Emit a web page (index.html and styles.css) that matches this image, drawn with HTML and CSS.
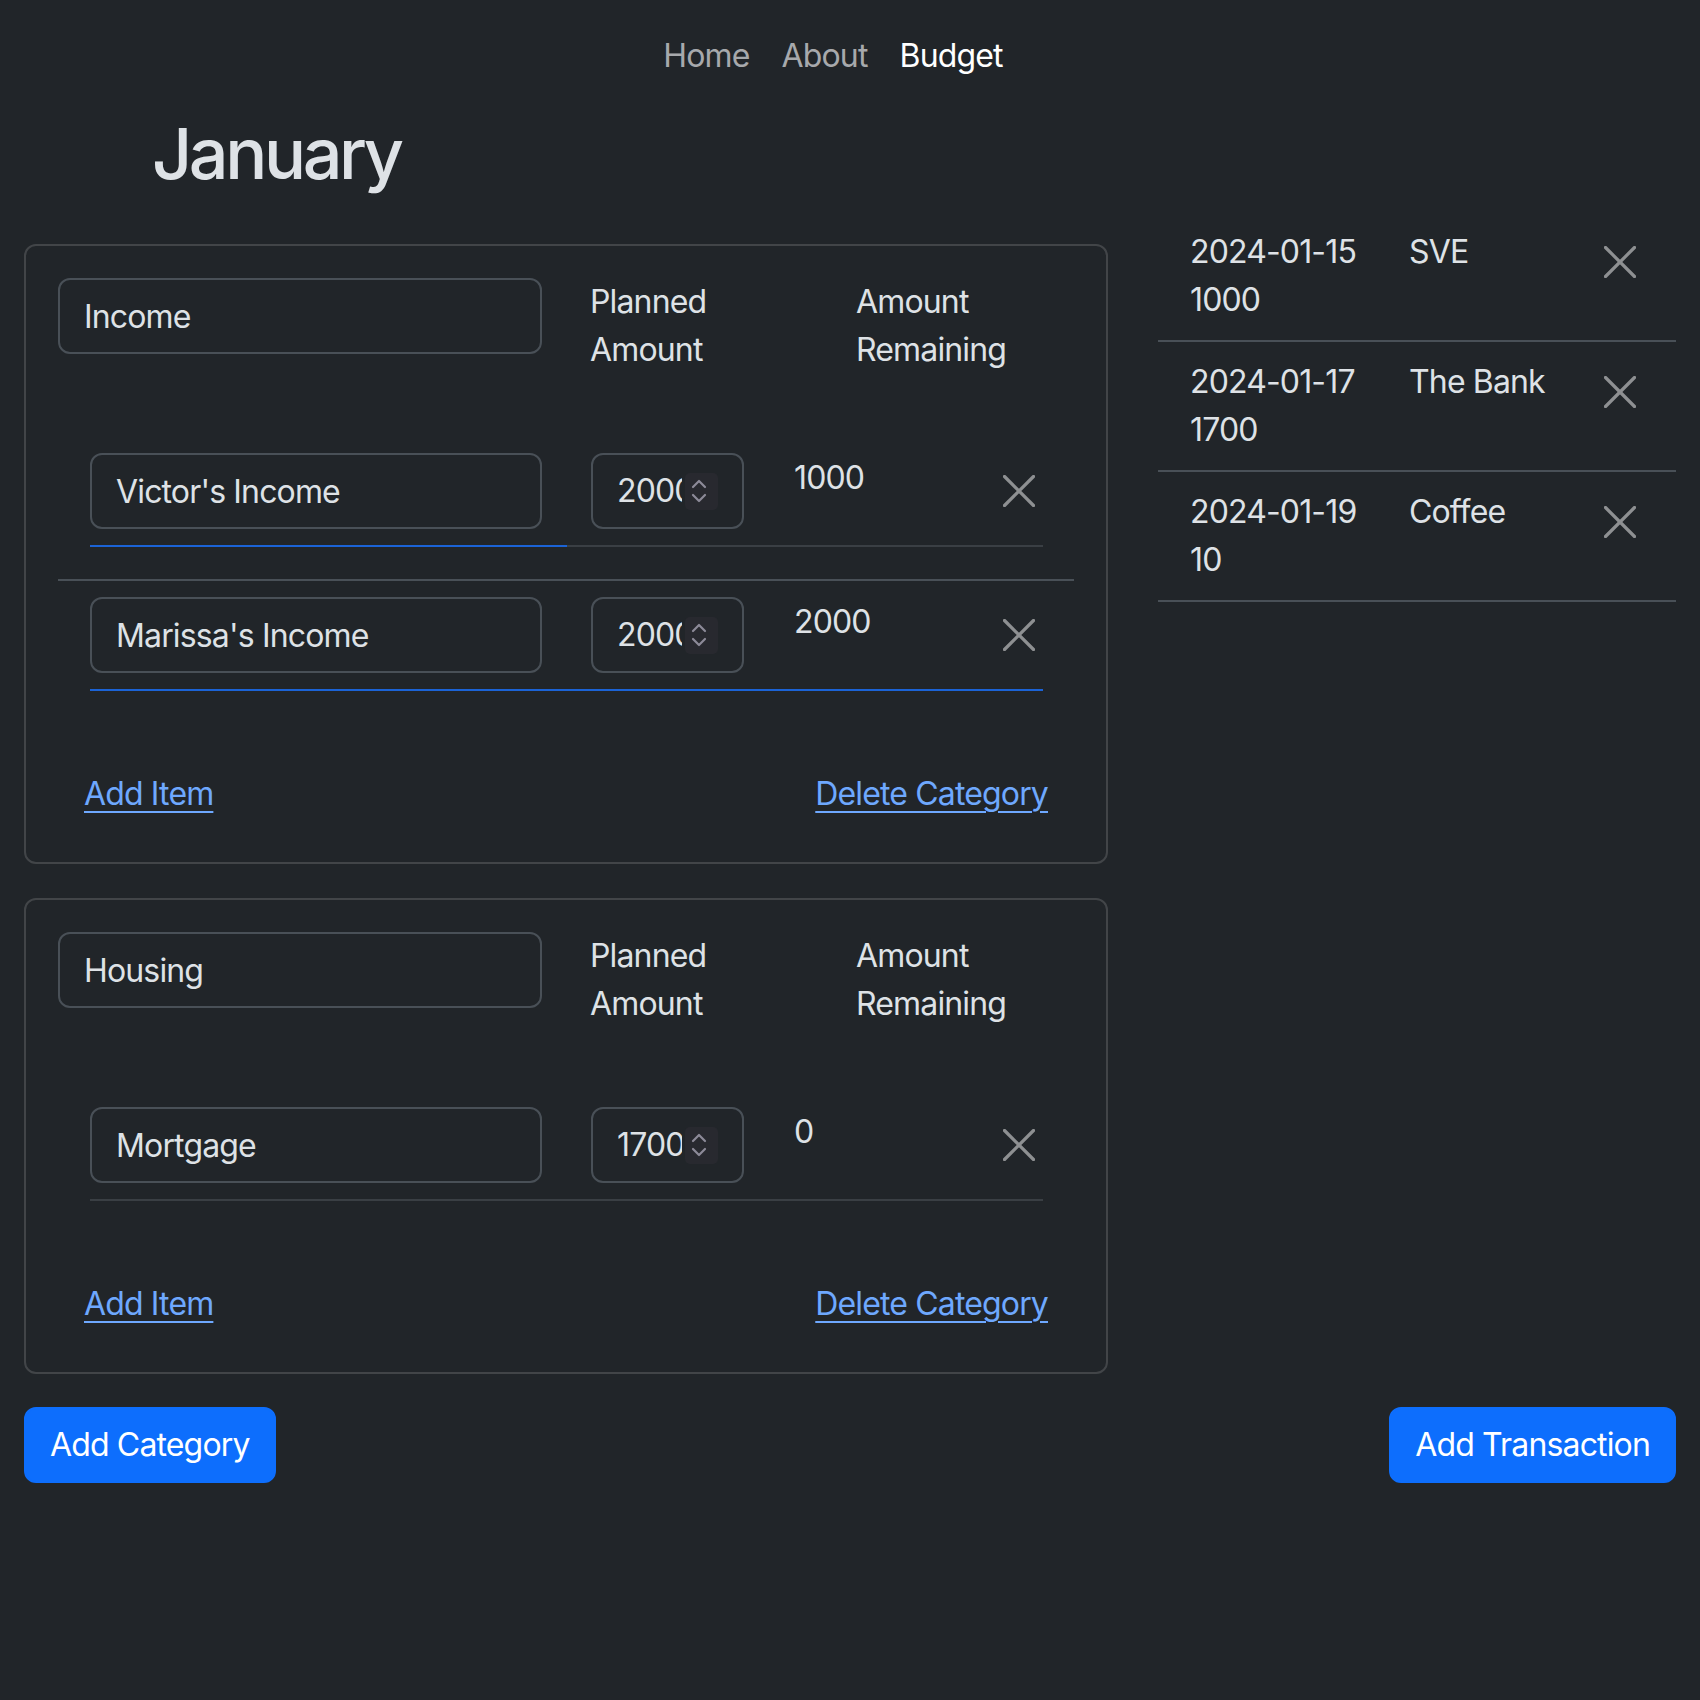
FILE: index.html
```html
<!DOCTYPE html>
<html lang="en">
<head>
<meta charset="utf-8">
<title>Budget</title>
<link rel="stylesheet" href="styles.css">
</head>
<body>
<nav class="topnav">
  <a class="nav-link" href="#">Home</a>
  <a class="nav-link" href="#">About</a>
  <a class="nav-link active" href="#">Budget</a>
</nav>
<main class="page">
  <h1 class="month">January</h1>
  <div class="layout">
    <section class="categories">
      <div class="card">
        <div class="cat-head">
          <input class="field" type="text" value="Income">
          <div class="col-label">Planned Amount</div>
          <div class="col-label">Amount Remaining</div>
        </div>
        <ul class="items">
          <li class="item">
            <div class="item-row">
              <input class="field item-name" type="text" value="Victor's Income">
              <div class="field num">
                <input type="number" value="2000">
                <span class="spin"><svg viewBox="0 0 33 37" width="33" height="37"><polyline points="8,14 14,8 20,14"/><polyline points="8,22 14,28 20,22"/></svg></span>
              </div>
              <div class="remaining">1000</div>
              <button class="btn-close" type="button" aria-label="Remove"><svg viewBox="0 0 32 32" width="32" height="32"><line x1="1.5" y1="1.5" x2="30.5" y2="30.5"/><line x1="30.5" y1="1.5" x2="1.5" y2="30.5"/></svg></button>
            </div>
            <div class="progress"><div class="bar" style="width:50%"></div></div>
          </li>
          <li class="item">
            <div class="item-row">
              <input class="field item-name" type="text" value="Marissa's Income">
              <div class="field num">
                <input type="number" value="2000">
                <span class="spin"><svg viewBox="0 0 33 37" width="33" height="37"><polyline points="8,14 14,8 20,14"/><polyline points="8,22 14,28 20,22"/></svg></span>
              </div>
              <div class="remaining">2000</div>
              <button class="btn-close" type="button" aria-label="Remove"><svg viewBox="0 0 32 32" width="32" height="32"><line x1="1.5" y1="1.5" x2="30.5" y2="30.5"/><line x1="30.5" y1="1.5" x2="1.5" y2="30.5"/></svg></button>
            </div>
            <div class="progress"><div class="bar" style="width:100%"></div></div>
          </li>
        </ul>
        <div class="card-actions">
          <a class="link-btn" href="#">Add Item</a>
          <a class="link-btn" href="#">Delete Category</a>
        </div>
      </div>

      <div class="card">
        <div class="cat-head">
          <input class="field" type="text" value="Housing">
          <div class="col-label">Planned Amount</div>
          <div class="col-label">Amount Remaining</div>
        </div>
        <ul class="items">
          <li class="item">
            <div class="item-row">
              <input class="field item-name" type="text" value="Mortgage">
              <div class="field num">
                <input type="number" value="1700">
                <span class="spin"><svg viewBox="0 0 33 37" width="33" height="37"><polyline points="8,14 14,8 20,14"/><polyline points="8,22 14,28 20,22"/></svg></span>
              </div>
              <div class="remaining">0</div>
              <button class="btn-close" type="button" aria-label="Remove"><svg viewBox="0 0 32 32" width="32" height="32"><line x1="1.5" y1="1.5" x2="30.5" y2="30.5"/><line x1="30.5" y1="1.5" x2="1.5" y2="30.5"/></svg></button>
            </div>
            <div class="progress"><div class="bar" style="width:0%"></div></div>
          </li>
        </ul>
        <div class="card-actions">
          <a class="link-btn" href="#">Add Item</a>
          <a class="link-btn" href="#">Delete Category</a>
        </div>
      </div>
    </section>

    <aside class="side">
      <ul class="transactions">
        <li class="txn">
          <div class="txn-date"><div>2024-01-15</div><div>1000</div></div>
          <div class="txn-name">SVE</div>
          <button class="btn-close" type="button" aria-label="Remove"><svg viewBox="0 0 32 32" width="32" height="32"><line x1="1.5" y1="1.5" x2="30.5" y2="30.5"/><line x1="30.5" y1="1.5" x2="1.5" y2="30.5"/></svg></button>
        </li>
        <li class="txn">
          <div class="txn-date"><div>2024-01-17</div><div>1700</div></div>
          <div class="txn-name">The Bank</div>
          <button class="btn-close" type="button" aria-label="Remove"><svg viewBox="0 0 32 32" width="32" height="32"><line x1="1.5" y1="1.5" x2="30.5" y2="30.5"/><line x1="30.5" y1="1.5" x2="1.5" y2="30.5"/></svg></button>
        </li>
        <li class="txn">
          <div class="txn-date"><div>2024-01-19</div><div>10</div></div>
          <div class="txn-name">Coffee</div>
          <button class="btn-close" type="button" aria-label="Remove"><svg viewBox="0 0 32 32" width="32" height="32"><line x1="1.5" y1="1.5" x2="30.5" y2="30.5"/><line x1="30.5" y1="1.5" x2="1.5" y2="30.5"/></svg></button>
        </li>
      </ul>
    </aside>
  </div>

  <div class="actions">
    <button class="btn-primary" type="button">Add Category</button>
    <button class="btn-primary" type="button">Add Transaction</button>
  </div>
</main>
</body>
</html>
```

FILE: styles.css
```css
* { box-sizing: border-box; }

html, body {
  margin: 0;
  background: #212529;
}

body {
  color: #dee2e6;
  font-family: Inter, "Noto Sans", sans-serif;
  font-size: 32px;
  line-height: 48px;
  letter-spacing: -0.85px;
  min-height: 1700px;
}

/* nav */
.topnav {
  display: flex;
  justify-content: center;
  padding: 16px 34px 16px 0;
}
.nav-link {
  display: block;
  padding: 16px 16px;
  color: #a7a9ac;
  text-decoration: none;
}
.nav-link.active { color: #ffffff; }

.page { padding: 0 24px; }

.month {
  margin: 0 0 16px;
  padding-left: 128px;
  font-size: 70px;
  line-height: 84px;
  font-weight: 500;
  letter-spacing: -3.4px;
  color: #dee2e6;
}

.layout {
  display: grid;
  grid-template-columns: 1084px 518px;
  column-gap: 50px;
  align-items: start;
}

.categories {
  display: flex;
  flex-direction: column;
  gap: 34px;
  padding-top: 32px;
}

.card {
  border: 2px solid rgba(255, 255, 255, 0.15);
  border-radius: 12px;
  padding: 32px 32px 30px;
}

.field {
  display: block;
  height: 76px;
  margin: 0;
  padding: 12px 24px;
  border: 2px solid #495057;
  border-radius: 12px;
  background: #212529;
  color: #dee2e6;
  font: inherit;
  letter-spacing: inherit;
  outline: none;
}

.cat-head {
  display: grid;
  grid-template-columns: 484px 218px 1fr;
  column-gap: 48px;
  align-items: start;
  margin-bottom: 63px;
}
.cat-head .field { width: 484px; }
.col-label { line-height: 48px; }

.items {
  list-style: none;
  margin: 0;
  padding: 0;
}
.item {
  padding: 16px 31px 32px 32px;
  border-bottom: 2px solid #495057;
}
.item:last-child { border-bottom: 0; }

.item-row {
  display: flex;
  align-items: flex-start;
}
.item-name { width: 452px; flex: none; }

.num {
  width: 153px;
  flex: none;
  margin-left: 49px;
  display: flex;
  align-items: center;
  gap: 3px;
}
.num input {
  flex: 1;
  width: 0;
  min-width: 0;
  border: 0;
  padding: 0;
  margin: 0;
  background: transparent;
  color: #dee2e6;
  font: inherit;
  letter-spacing: inherit;
  line-height: 48px;
  height: 48px;
  outline: none;
  -moz-appearance: textfield;
}
.num input::-webkit-inner-spin-button,
.num input::-webkit-outer-spin-button {
  -webkit-appearance: none;
  margin: 0;
}
.spin {
  display: block;
  flex: none;
  width: 33px;
  height: 37px;
  border-radius: 5px;
  background: #28292f;
}
.spin svg {
  display: block;
  fill: none;
  stroke: #8c8a98;
  stroke-width: 2.2;
  stroke-linecap: round;
  stroke-linejoin: round;
}

.remaining {
  flex: 1;
  margin-left: 50px;
  padding-top: 1px;
}

.btn-close {
  flex: none;
  width: 48px;
  height: 48px;
  padding: 8px;
  border: 0;
  background: transparent;
  align-self: center;
  cursor: pointer;
}
.btn-close svg {
  display: block;
  stroke: #8e9092;
  stroke-width: 3.2;
  stroke-linecap: round;
}

.progress {
  margin-top: 16px;
  height: 2px;
  background: #3a3f44;
}
.bar {
  height: 100%;
  background: #1b63d6;
}

.card-actions {
  display: flex;
  justify-content: space-between;
  margin-top: 33px;
}
.link-btn {
  display: block;
  padding: 12px 24px;
  border: 2px solid transparent;
  color: #6ea8fe;
  text-decoration: underline;
  text-decoration-thickness: 2px;
  text-underline-offset: 6px;
}

/* transactions */
.transactions {
  list-style: none;
  margin: 0;
  padding: 0;
}
.txn {
  display: grid;
  grid-template-columns: 219px 1fr 48px;
  align-items: start;
  padding: 16px 32px;
  border-bottom: 2px solid #495057;
}
.txn .btn-close { margin-top: 10px; align-self: start; }

.actions {
  display: flex;
  justify-content: space-between;
  margin-top: 33px;
}
.btn-primary {
  display: block;
  margin: 0;
  padding: 12px 24px;
  border: 2px solid #0d6efd;
  border-radius: 12px;
  background: #0d6efd;
  color: #ffffff;
  font: inherit;
  letter-spacing: inherit;
  line-height: 48px;
  cursor: pointer;
}
```
